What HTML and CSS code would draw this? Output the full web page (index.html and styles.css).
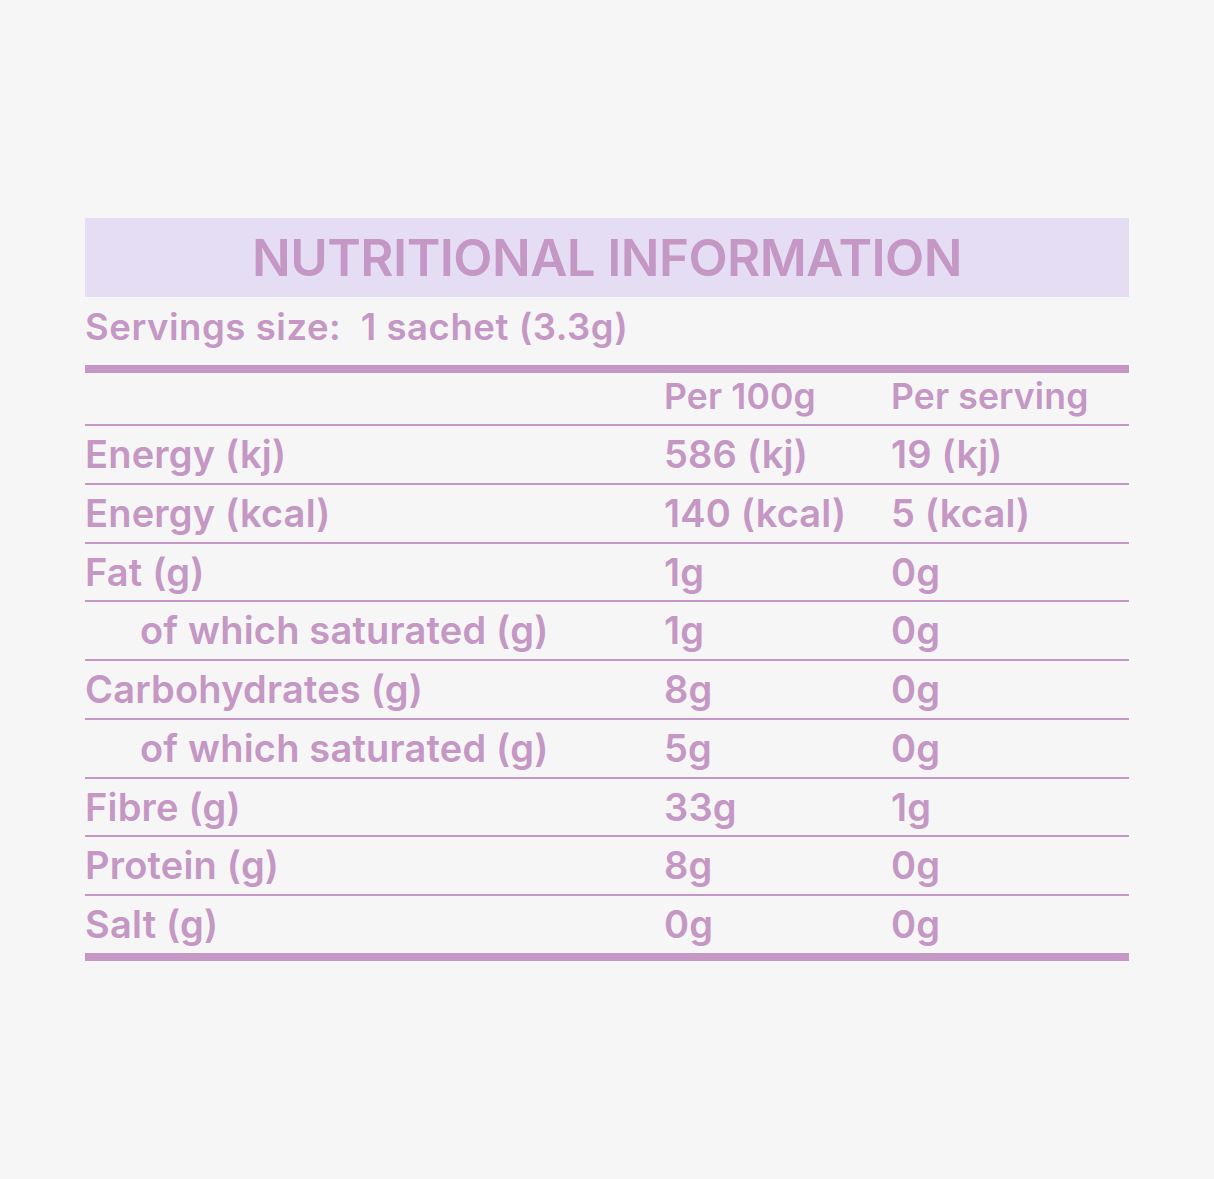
FILE: index.html
```html
<!DOCTYPE html>
<html lang="en">
<head>
<meta charset="utf-8">
<link rel="stylesheet" href="styles.css">
<title>Nutritional Information</title>
</head>
<body>
<main class="panel">
  <h1 class="title">NUTRITIONAL INFORMATION</h1>
  <p class="serving">Servings size:&nbsp; 1 sachet (3.3g)</p>
  <div class="table">
    <div class="row head"><span></span><span>Per 100g</span><span>Per serving</span></div>
    <div class="row"><span>Energy (kj)</span><span>586 (kj)</span><span>19 (kj)</span></div>
    <div class="row"><span>Energy (kcal)</span><span>140 (kcal)</span><span>5 (kcal)</span></div>
    <div class="row"><span>Fat (g)</span><span>1g</span><span>0g</span></div>
    <div class="row"><span class="sub">of which saturated (g)</span><span>1g</span><span>0g</span></div>
    <div class="row"><span>Carbohydrates (g)</span><span>8g</span><span>0g</span></div>
    <div class="row"><span class="sub">of which saturated (g)</span><span>5g</span><span>0g</span></div>
    <div class="row"><span>Fibre (g)</span><span>33g</span><span>1g</span></div>
    <div class="row"><span>Protein (g)</span><span>8g</span><span>0g</span></div>
    <div class="row last"><span>Salt (g)</span><span>0g</span><span>0g</span></div>
  </div>
</main>
</body>
</html>
```
FILE: styles.css
```css
html, body {
  margin: 0;
  padding: 0;
  background: #f6f6f6;
}
body {
  font-family: Inter, "Liberation Sans", sans-serif;
  color: #c497c4;
  font-weight: 600;
}
.panel {
  width: 1044px;
  margin: 218px 0 0 85px;
}
.title {
  margin: 0;
  height: 79px;
  background: #e4ddf3;
  font-size: 51px;
  font-weight: 600;
  line-height: 79px;
  text-align: center;
  letter-spacing: -0.55px;
}
.serving {
  margin: 0;
  height: 54px;
  padding-top: 2px;
  padding-bottom: 12px;
  line-height: 56px;
  font-size: 36.5px;
  letter-spacing: 0.55px;
  border-bottom: 8px solid #c497c4;
}
.table {
  display: flex;
  flex-direction: column;
}
.row {
  display: grid;
  grid-template-columns: 579px 227px 1fr;
  height: 56.75px;
  border-bottom: 2px solid #c497c4;
  font-size: 38px;
  line-height: 57px;
  letter-spacing: 0.2px;
}
.row.head {
  height: 51px;
  line-height: 48px;
  font-size: 35.5px;
  letter-spacing: 0.15px;
}
.row.last {
  border-bottom: 8px solid #c497c4;
}
.sub {
  padding-left: 55px;
}
```
